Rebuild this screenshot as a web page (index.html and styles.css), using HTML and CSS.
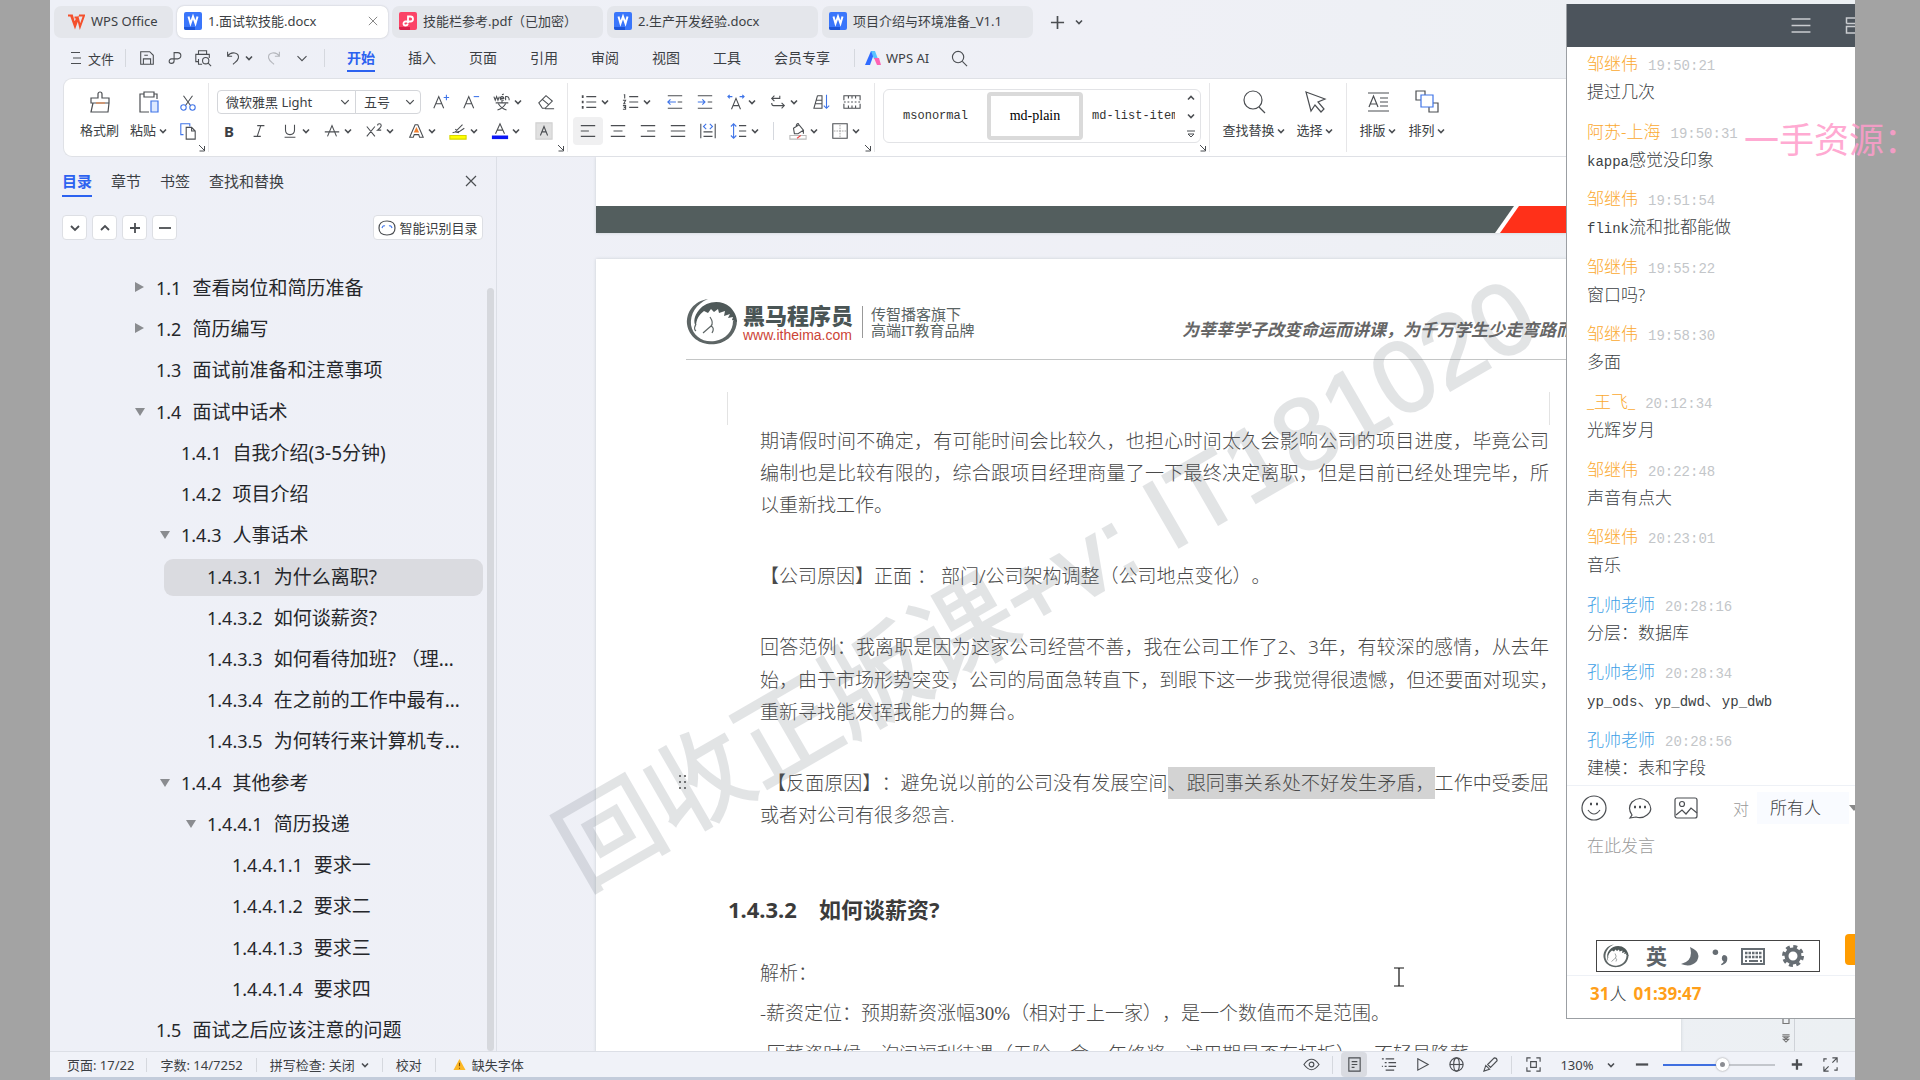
FILE: index.html
```html
<!DOCTYPE html>
<html lang="zh-CN">
<head>
    <meta charset="utf-8">
    <title>1.面试软技能.docx - WPS Office</title>
    <link rel="stylesheet" href="styles.css">
</head>

<body>

    <!-- SHARED ICONS -->
    <svg class="defs">
        <symbol id="chev" viewBox="0 0 8 8"><path d="M1 2.5l3 3 3-3" /></symbol>
        <symbol id="corner" viewBox="0 0 8 8"><path d="M1 1l5 5M6.500 2v5h-5" /></symbol>
        <symbol id="word" viewBox="0 0 18 18"><rect width="18" height="18" rx="2" fill="#3a76fb" stroke="none" /><path d="M0 15h11v3H2q-2 0-2-2z" fill="#1d55d8" stroke="none" /><path d="M4.500 4.500l2 7 2.500-7 2.500 7 2-7" stroke="#fff" stroke-width="2" /></symbol>
        <symbol id="horse" viewBox="0 0 52 48">
            <path d="M22 1C8 3 0 14 1 26c2 15 16 22 29 20 13-2 21-12 21-24l-4 1c0 10-7 18-18 20C17 45 7 38 5 27 4 16 10 6 22 1z" fill="#5d6565" stroke="none" />
            <path d="M13 12C20 3 35 1 44 9c4 4 7 9 7 15l-5-2 1-3-5 1 2-4-6 2 1-5-6 2-1-4-4 3-3-3-3 4-4-2c-5 4-8 8-8 16-3-5-2-11 3-17z" fill="#4f5959" stroke="none" />
            <path d="M10 26q-3 5 0 7M24 19q4 6 1 9l-8 7M25 28q4 2 1 7" stroke="#5d6565" stroke-width="1.200" />
        </symbol>
    </svg>

    <div class="window">

        <!-- TABS -->
        <div class="tabs">
            <button class="tab home"><svg class="i18" viewBox="0 0 18 18"><path d="M1 3.500h4l2.500 9 3-7h-3M4 3.500l4 11 3-8 2 8 4-11h-5" stroke="#f4502c" stroke-width="2" /></svg>WPS Office</button>
            <button class="tab current"><svg class="i18"><use href="#word" /></svg>1.面试软技能.docx<svg class="close" viewBox="0 0 12 12"><path d="M1 1l10 10M11 1L1 11" /></svg></button>
            <button class="tab"><svg class="i18" viewBox="0 0 18 18"><rect width="18" height="18" rx="2" fill="#fb4467" stroke="none" /><path d="M0 15h11v3H2q-2 0-2-2z" fill="#d9204a" stroke="none" /><path d="M9 11V4.500h2.500a2.500 2.500 0 010 5H6.500a2 2 0 100 4q2 0 2.500-2" stroke="#fff" stroke-width="1.800" /></svg>技能栏参考.pdf（已加密）</button>
            <button class="tab"><svg class="i18"><use href="#word" /></svg>2.生产开发经验.docx</button>
            <button class="tab"><svg class="i18"><use href="#word" /></svg>项目介绍与环境准备_V1.1</button>
            <button class="new"><svg viewBox="0 0 16 16"><path d="M8 1v14M1 8h14" stroke-width="1.800" /></svg><svg class="chev"><use href="#chev" /></svg></button>
        </div>

        <!-- MENU -->
        <div class="menubar">
            <button class="file"><svg viewBox="0 0 12 14"><path d="M1 1.500h9M3 7h8M1 12.500h10" /></svg>文件</button>
            <span class="sep"></span>
            <div class="quick">
                <button><svg viewBox="0 0 20 20"><path d="M3 3h10l4 4v10H3zM6 17v-6h8v6M7 7h4" /></svg></button>
                <button><svg viewBox="0 0 20 20"><path d="M9 13V4h4a3 3 0 010 7H6a2.500 2.500 0 100 5q3 0 3-3" /></svg></button>
                <button><svg viewBox="0 0 20 20"><path d="M5 6V2h9v4M5 14H2V6h15v4M5 11v6h4" /><circle cx="13" cy="13" r="3.500" /><path d="M15.500 15.500L19 19" /></svg></button>
                <button class="drop"><svg viewBox="0 0 20 20"><path d="M4 3v5h5M4 8c4-6 13-4 12 2-1 4-4 5-6 7" /></svg><svg class="chev"><use href="#chev" /></svg></button>
                <button class="off"><svg viewBox="0 0 20 20"><path d="M16 3v5h-5M16 8C12 2 3 4 4 10c1 4 4 5 6 7" /></svg></button>
                <button><svg viewBox="0 0 20 20"><path d="M5 8l5 5 5-5" /></svg></button>
            </div>
            <span class="sep"></span>
            <nav>
                <a href="#" class="on">开始</a>
                <a href="#">插入</a>
                <a href="#">页面</a>
                <a href="#">引用</a>
                <a href="#">审阅</a>
                <a href="#">视图</a>
                <a href="#">工具</a>
                <a href="#">会员专享</a>
            </nav>
            <span class="sep"></span>
            <button class="ai"><svg viewBox="0 0 16 14"><path d="M6 0h4L5 14H0z" fill="#2f6bff" stroke="none" /><path d="M6 0h4l3 8H9z" fill="#58c3ff" stroke="none" /><path d="M9 7h5l2 7h-4z" fill="#ff62b4" stroke="none" /></svg>WPS AI</button>
            <button class="search"><svg viewBox="0 0 18 18"><circle cx="7.500" cy="7.500" r="6" /><path d="M12 12l5 5" /></svg></button>
        </div>

        <!-- RIBBON -->
        <div class="ribbon">
            <div class="group clip">
                <button class="big"><svg viewBox="0 0 24 24"><path d="M10 8V4a2 2 0 014 0v4h7v5H3V8zM5 13L3 22h17l1-9" /><path d="M8 13h9" stroke="#e98d52" /></svg>格式刷</button>
                <button class="big"><svg viewBox="0 0 24 24"><path d="M7 4H3v18h9M17 4h3v5M7 2h10v5H7z" /><path d="M14 11h7v11h-7z" stroke="#3f74e8" fill="#dce8ff" /></svg><span>粘贴<svg class="chev"><use href="#chev" /></svg></span></button>
                <div class="stack">
                    <button><svg viewBox="0 0 20 20"><path d="M5 2l8 11M15 2L7 13" /><circle cx="5" cy="15" r="3" stroke="#3f74e8" /><circle cx="15" cy="15" r="3" stroke="#3f74e8" /></svg></button>
                    <button><svg viewBox="0 0 20 20"><path d="M5 14H2V2h10v3" stroke="#3f74e8" /><path d="M8 6h6l4 4v9H8zM14 6v4h4" /></svg></button>
                </div>
                <svg class="corner"><use href="#corner" /></svg>
            </div>

            <div class="group font">
                <div class="row">
                    <label class="combo wide"><select aria-label="字体"><option>微软雅黑 Light</option></select><svg class="chev"><use href="#chev" /></svg></label>
                    <label class="combo"><select aria-label="字号"><option>五号</option></select><svg class="chev"><use href="#chev" /></svg></label>
                    <button class="first"><svg viewBox="0 0 20 20"><path d="M2 17L7.500 4 13 17M4 12h7" /><path d="M16 2v6M13 5h6" stroke="#3f74e8" /></svg></button>
                    <button><svg viewBox="0 0 20 20"><path d="M2 17L7.500 4 13 17M4 12h7" /><path d="M13 4h6" stroke="#3f74e8" /></svg></button>
                    <button class="drop"><svg viewBox="0 0 20 20"><path d="M1 4l1.500 4L4 4l1.500 4L7 4M8 6h4q0-2-2-2t-2 2 4 2M14 8V4q4-1 4 4M10 2l2-1M3 11h14M10 9v2M6 12q3 5 9 7M14 12q-3 5-9 7" /></svg><svg class="chev"><use href="#chev" /></svg></button>
                    <button class="gap"><svg viewBox="0 0 20 20"><path d="M2 11l8-8 7 6-8 8H6zM6 7l7 6M9 17.500h10" /></svg></button>
                </div>
                <div class="row">
                    <button class="letter"><b>B</b></button>
                    <button><svg viewBox="0 0 20 20"><path d="M8 4h8M4 16h8M12 4L8 16" /></svg></button>
                    <button class="drop"><svg viewBox="0 0 20 20"><path d="M5 3v6q0 5 5 5t5-5V3M4 17h12" /></svg><svg class="chev"><use href="#chev" /></svg></button>
                    <button class="drop"><svg viewBox="0 0 20 20"><path d="M5 16l5-12 5 12M2 11h16" /></svg><svg class="chev"><use href="#chev" /></svg></button>
                    <button class="drop"><svg viewBox="0 0 20 20"><path d="M2 5l9 11M11 5L2 16M14 4q0-2 2-2t2 2-4 5h4" /></svg><svg class="chev"><use href="#chev" /></svg></button>
                    <button class="drop"><svg viewBox="0 0 20 20"><path d="M3 17L9 3h3l6 14h-4l-1-3H8l-1 3z" /><path d="M10.500 7l2 4h-4z" stroke="#f08030" fill="#f08030" /></svg><svg class="chev"><use href="#chev" /></svg></button>
                    <button class="drop"><svg viewBox="0 0 20 20"><path d="M4 12l3-1 8-8M7 8l4 3 6-4M7 11l4 1" /><path d="M1 15h18v4H1z" fill="#ff0" stroke="#d6d600" /></svg><svg class="chev"><use href="#chev" /></svg></button>
                    <button class="drop"><svg viewBox="0 0 20 20"><path d="M5 13l5-11 5 11M7 9h6" /><path d="M1 15h18v4H1z" fill="#0b16f5" stroke="none" /></svg><svg class="chev"><use href="#chev" /></svg></button>
                    <button class="gap"><svg viewBox="0 0 20 20"><path d="M1 1h18v18H1z" fill="#e0e0e0" stroke="#d0d0d0" /><path d="M6 15l4-10 4 10M7 11h6" /></svg></button>
                </div>
                <svg class="corner"><use href="#corner" /></svg>
            </div>

            <div class="group para">
                <div class="row">
                    <button class="drop"><svg viewBox="0 0 20 20"><path d="M7 4h11M7 10h11M7 16h11" /><path d="M2 4h2M2 10h2M2 16h2" stroke-width="3" /></svg><svg class="chev"><use href="#chev" /></svg></button>
                    <button class="drop"><svg viewBox="0 0 20 20"><path d="M8 4h10M8 10h10M8 16h10" /><path d="M2 2h1v4M1 8h3l-2 4h2M1 14h3v4H1M2 16h2" /></svg><svg class="chev"><use href="#chev" /></svg></button>
                    <button class="gap"><svg viewBox="0 0 20 20"><path d="M2 3h16M13 10h5M2 17h16" /><path d="M11 10H2M5 7l-3 3 3 3" stroke="#3f74e8" /></svg></button>
                    <button><svg viewBox="0 0 20 20"><path d="M2 3h16M13 10h5M2 17h16" /><path d="M2 10h8M7 7l3 3-3 3" stroke="#3f74e8" /></svg></button>
                    <button class="drop"><svg viewBox="0 0 20 20"><path d="M5 18l5-12 5 12M7 14h6" /><path d="M1 4h5M14 4h5M3 2L1 4l2 2M17 2l2 2-2 2" stroke="#3f74e8" /></svg><svg class="chev"><use href="#chev" /></svg></button>
                    <button class="drop"><svg viewBox="0 0 20 20"><path d="M6 3L3 6l3 3M3 6h9V3M14 11l3 3-3 3M17 14H5q-2 0-2-3" /></svg><svg class="chev"><use href="#chev" /></svg></button>
                    <button class="gap"><svg viewBox="0 0 20 20"><path d="M5 3h5v14H1L5 3M4 8h6M3 12h7" /><path d="M15 2v15M12 14l3 3 3-3" stroke="#3f74e8" /></svg></button>
                    <button><svg viewBox="0 0 20 20"><path d="M1 8V3h18v5M1 12v5h18v-5M6 3v3M10 3v3M14 3v3M6 17v-3M10 17v-3M14 17v-3M1 10h2M5 10h2M9 10h2M13 10h2M17 10h2" /></svg></button>
                </div>
                <div class="row">
                    <button class="picked"><svg viewBox="0 0 20 20"><path d="M2 4h16M2 10h9M2 16h16" /></svg></button>
                    <button><svg viewBox="0 0 20 20"><path d="M2 4h16M5 10h10M2 16h16" /></svg></button>
                    <button><svg viewBox="0 0 20 20"><path d="M2 4h16M9 10h9M2 16h16" /></svg></button>
                    <button><svg viewBox="0 0 20 20"><path d="M2 4h16M2 10h16M2 16h16" /></svg></button>
                    <button><svg viewBox="0 0 20 20"><path d="M2 2v16M18 2v16M5 11h10M5 16h10" /><path d="M8 2L5 5l3 3M12 2l3 3-3 3" stroke="#3f74e8" /></svg></button>
                    <button class="drop"><svg viewBox="0 0 20 20"><path d="M10 4h8M10 10h8M10 16h8" /><path d="M4 2v16M1 5l3-3 3 3M1 15l3 3 3-3" stroke="#3f74e8" /></svg><svg class="chev"><use href="#chev" /></svg></button>
                    <span class="sep"></span>
                    <button class="drop"><svg viewBox="0 0 20 20"><path d="M5 7l6-4 5 6-6 4H6zM8 5q0-4 3-3M16 9v4" /><path d="M1 15h18v4H1z" stroke="#bbb" /><path d="M9 18l4-3" stroke="#e44" /></svg><svg class="chev"><use href="#chev" /></svg></button>
                    <button class="drop"><svg viewBox="0 0 20 20"><path d="M2 2h16v16H2z" /><path d="M10 3v14M3 10h14" stroke="#aaa" stroke-dasharray="2 1" /></svg><svg class="chev"><use href="#chev" /></svg></button>
                </div>
                <svg class="corner"><use href="#corner" /></svg>
            </div>

            <div class="group styles">
                <div class="gallery">
                    <button class="mono">msonormal</button>
                    <button class="chosen">md-plain</button>
                    <button class="mono cut">md-list-item</button>
                    <div class="arrows">
                        <svg class="chev up"><use href="#chev" /></svg>
                        <svg class="chev"><use href="#chev" /></svg>
                        <svg class="chev thin" viewBox="0 0 8 8"><path d="M0 1h8M1 4l3 3 3-3z" /></svg>
                    </div>
                </div>
                <svg class="corner"><use href="#corner" /></svg>
            </div>

            <div class="group edit">
                <button class="big"><svg viewBox="0 0 24 24"><circle cx="11" cy="10" r="9" /><path d="M17 17l6 6" /></svg><span>查找替换<svg class="chev"><use href="#chev" /></svg></span></button>
                <button class="big"><svg viewBox="0 0 24 24"><path d="M3 2l19 7-7 3 6 7-3 3-6-7-4 6z" /></svg><span>选择<svg class="chev"><use href="#chev" /></svg></span></button>
            </div>

            <div class="group arrange">
                <button class="big"><svg viewBox="0 0 24 24"><path d="M2 3h21M2 21h21M14 8h8M14 12h8M14 16h8M3 17L7.500 6 12 17M4 14h7" /></svg><span>排版<svg class="chev"><use href="#chev" /></svg></span></button>
                <button class="big"><svg viewBox="0 0 24 24"><path d="M6 10H1V1h9v4M18 13h5v9h-9v-5" /><path d="M6 5h12v12H6z" stroke="#3f74e8" /></svg><span>排列<svg class="chev"><use href="#chev" /></svg></span></button>
            </div>
        </div>

        <div class="main">

            <!-- OUTLINE -->
            <aside class="outline">
                <div class="outline-tabs">
                    <a href="#" class="on">目录</a>
                    <a href="#">章节</a>
                    <a href="#">书签</a>
                    <a href="#">查找和替换</a>
                    <button><svg viewBox="0 0 12 12"><path d="M1 1l10 10M11 1L1 11" /></svg></button>
                </div>
                <div class="outline-tools">
                    <button><svg viewBox="0 0 12 12"><path d="M2 4l4 4 4-4" /></svg></button>
                    <button><svg viewBox="0 0 12 12"><path d="M2 8l4-4 4 4" /></svg></button>
                    <button><svg viewBox="0 0 12 12"><path d="M6 1v10M1 6h10" /></svg></button>
                    <button><svg viewBox="0 0 12 12"><path d="M0 6h12" /></svg></button>
                    <button class="smart"><svg viewBox="0 0 18 16"><path d="M9 1c5 0 8 2 8 7s-3 7-8 7-8-2-8-7 3-7 8-7z" /><path d="M4 8q1-3 3-2M11 6q2-1 3 2" stroke="#3f74e8" /></svg>智能识别目录</button>
                </div>
                <div class="tree-wrap">
                    <div class="tree">
                        <a href="#" class="l1 shut"><i>1.1</i>查看岗位和简历准备</a>
                        <a href="#" class="l1 shut"><i>1.2</i>简历编写</a>
                        <a href="#" class="l1"><i>1.3</i>面试前准备和注意事项</a>
                        <a href="#" class="l1 open"><i>1.4</i>面试中话术</a>
                        <a href="#" class="l2"><i>1.4.1</i>自我介绍(3-5分钟)</a>
                        <a href="#" class="l2"><i>1.4.2</i>项目介绍</a>
                        <a href="#" class="l2 open"><i>1.4.3</i>人事话术</a>
                        <a href="#" class="l3 on"><i>1.4.3.1</i>为什么离职?</a>
                        <a href="#" class="l3"><i>1.4.3.2</i>如何谈薪资?</a>
                        <a href="#" class="l3"><i>1.4.3.3</i>如何看待加班? （理…</a>
                        <a href="#" class="l3"><i>1.4.3.4</i>在之前的工作中最有…</a>
                        <a href="#" class="l3"><i>1.4.3.5</i>为何转行来计算机专…</a>
                        <a href="#" class="l2 open"><i>1.4.4</i>其他参考</a>
                        <a href="#" class="l3 open"><i>1.4.4.1</i>简历投递</a>
                        <a href="#" class="l4"><i>1.4.4.1.1</i>要求一</a>
                        <a href="#" class="l4"><i>1.4.4.1.2</i>要求二</a>
                        <a href="#" class="l4"><i>1.4.4.1.3</i>要求三</a>
                        <a href="#" class="l4"><i>1.4.4.1.4</i>要求四</a>
                        <a href="#" class="l1"><i>1.5</i>面试之后应该注意的问题</a>
                    </div>
                    <div class="thumb"></div>
                </div>
            </aside>

            <!-- DOCUMENT -->
            <div class="doc">
                <div class="pages">
                    <div class="page prev">
                        <div class="band"><span class="dark"></span><span class="red"></span></div>
                    </div>
                    <div class="page">
                        <header>
                            <svg class="horse"><use href="#horse" /></svg>
                            <div class="brand"><strong>黑马程序员</strong><span>www.itheima.com</span></div>
                            <div class="tagline">传智播客旗下<br>高端IT教育品牌</div>
                            <div class="slogan">为莘莘学子改变命运而讲课，为千万学生少走弯路而</div>
                        </header>
                        <div class="marks"></div>
                        <article>
                            <p>期请假时间不确定，有可能时间会比较久，也担心时间太久会影响公司的项目进度，毕竟公司编制也是比较有限的，综合跟项目经理商量了一下最终决定离职，但是目前已经处理完毕，所以重新找工作。</p>
                            <p>【公司原因】正面 ： 部门/公司架构调整（公司地点变化）。</p>
                            <p>回答范例：我离职是因为这家公司经营不善，我在公司工作了2、3年，有较深的感情，从去年始，由于市场形势突变，公司的局面急转直下，到眼下这一步我觉得很遗憾，但还要面对现实<span class="half">，</span>重新寻找能发挥我能力的舞台。</p>
                            <p class="here"><svg class="grip" viewBox="0 0 9 16"><path d="M1 1h2M6 1h2M1 7h2M6 7h2M1 13h2M6 13h2" /></svg>【反面原因】：避免说以前的公司没有发展空间<mark>、跟同事关系处不好发生矛盾，</mark>工作中受委屈或者对公司有很多怨言.</p>
                            <h2><span>1.4.3.2</span>如何谈薪资?</h2>
                            <p class="tight">解析：</p>
                            <p class="tight">-薪资定位：预期薪资涨幅<span class="serif">30%</span>（相对于上一家），是一个数值而不是范围。</p>
                            <p class="tight">-压薪资时候，询问福利待遇（五险一金，年终奖，试用期是否有打折），不轻易降薪</p>
                        </article>
                    </div>
                </div>
                <div class="watermark">回收正版课+v: IT181020</div>
                <div class="vscroll">
                    <svg viewBox="0 0 8 8"><path d="M1 1h6v6H1z" /></svg>
                    <svg viewBox="0 0 8 10"><path d="M0 1h8M1 3h6L4 5zM1 6h6L4 9z" /></svg>
                </div>
                <svg class="ibeam" viewBox="0 0 12 20"><path d="M1 1h10M6 1v18M1 19h10" /></svg>
            </div>
        </div>

        <!-- STATUS BAR -->
        <div class="status">
            <span>页面: 17/22</span>
            <span>字数: 14/7252</span>
            <button>拼写检查: 关闭 <svg class="chev"><use href="#chev" /></svg></button>
            <button>校对</button>
            <button><svg class="warn" viewBox="0 0 14 14"><path d="M7 1l6.500 12H.5z" fill="#fcb827" stroke="none" /><path d="M7 5v4M7 10.500v1" stroke="#7a4a00" /></svg>缺失字体</button>
            <div class="views">
                <button><svg viewBox="0 0 18 18"><path d="M1 9q8-11 16 0-8 11-16 0z" /><circle cx="9" cy="9" r="2.500" /></svg></button>
                <span class="sep"></span>
                <button class="picked"><svg viewBox="0 0 18 18"><path d="M3 2h12v14H3zM6 6h6M6 9h6M6 12h3" /></svg></button>
                <button><svg viewBox="0 0 18 18"><path d="M2 3h2M6 3h9M5 7h2M9 7h8M5 11h2M9 11h8M6 15h9M2 11h1" /></svg></button>
                <button><svg viewBox="0 0 18 18"><path d="M4 3l11 6-11 6z" /></svg></button>
                <button><svg viewBox="0 0 18 18"><circle cx="9" cy="9" r="7" /><ellipse cx="9" cy="9" rx="3" ry="7" /><path d="M2 9h14" /></svg></button>
                <button><svg viewBox="0 0 18 18"><path d="M2 16l2-6 4 4zM6 9l7-7q3 0 3 3l-7 7z" /></svg></button>
                <span class="sep"></span>
                <button><svg viewBox="0 0 18 18"><path d="M2 6V2h4M12 2h4v4M16 12v4h-4M6 16H2v-4M6 6h6v6H6z" /></svg></button>
                <button class="zoom">130%<svg class="chev"><use href="#chev" /></svg></button>
                <button class="bold"><svg viewBox="0 0 18 18"><path d="M2 9h13" /></svg></button>
                <input type="range" min="0" max="100" value="54" aria-label="缩放">
                <button class="bold"><svg viewBox="0 0 18 18"><path d="M4 9h11M9.500 3.500v11" /></svg></button>
                <button class="full"><svg viewBox="0 0 18 18"><path d="M2 6V3h3M11 2h5v5M16 2l-5 5M16 12v3h-3M7 16H2v-5M2 16l5-5" /></svg></button>
            </div>
        </div>

        <!-- CHAT -->
        <section class="chat">
            <div class="chat-head">
                <svg viewBox="0 0 20 18"><path d="M0 2h20M0 9h20M0 16h20" /></svg>
                <svg viewBox="0 0 20 18"><path d="M1 7V1h18v6M1 10h18v7H1zM1 7h18" /></svg>
            </div>
            <ul>
                <li><b>邹继伟</b><time>19:50:21</time><p>提过几次</p></li>
                <li><b>阿苏-上海</b><time>19:50:31</time><p><span>kappa</span>感觉没印象</p></li>
                <li><b>邹继伟</b><time>19:51:54</time><p><span>flink</span>流和批都能做</p></li>
                <li><b>邹继伟</b><time>19:55:22</time><p>窗口吗?</p></li>
                <li><b>邹继伟</b><time>19:58:30</time><p>多面</p></li>
                <li><b>_王飞_</b><time>20:12:34</time><p>光辉岁月</p></li>
                <li><b>邹继伟</b><time>20:22:48</time><p>声音有点大</p></li>
                <li><b>邹继伟</b><time>20:23:01</time><p>音乐</p></li>
                <li class="teacher"><b>孔帅老师</b><time>20:28:16</time><p>分层：数据库</p></li>
                <li class="teacher"><b>孔帅老师</b><time>20:28:34</time><p><span>yp_ods</span>、<span>yp_dwd</span>、<span>yp_dwb</span></p></li>
                <li class="teacher"><b>孔帅老师</b><time>20:28:56</time><p>建模：表和字段</p></li>
            </ul>
            <div class="chat-tools">
                <button><svg viewBox="0 0 26 26"><circle cx="13" cy="13" r="12" /><path d="M7 15q6 8 12 0" /><path d="M9 9h2M15 9h2" stroke-width="2.500" /></svg></button>
                <button><svg viewBox="0 0 26 26"><path d="M5 20q-5-7 0-13 8-7 16 0 6 8-1 13-5 4-11 2l-6 1z" /><path d="M7 12h2M12 12h2M17 12h2" stroke-width="2.500" /></svg></button>
                <button><svg viewBox="0 0 26 26"><rect x="2" y="3" width="22" height="20" rx="2" /><circle cx="9" cy="9" r="2.500" /><path d="M3 20l6-5 4 4 5-6 6 5" /></svg></button>
                <label for="to">对</label>
                <select id="to"><option>所有人</option></select>
                <span class="to-arrow"></span>
            </div>
            <textarea placeholder="在此发言" aria-label="在此发言"></textarea>
            <div class="send-row">
                <div class="ime">
                    <svg class="ime-logo" viewBox="0 0 52 48"><use href="#horse" /></svg>
                    <b>英</b>
                    <svg viewBox="0 0 24 24"><path d="M13 3q12 5 7 14-6 7-16 3 13-3 9-17z" fill="#666d73" stroke="none" /></svg>
                    <svg viewBox="0 0 24 24"><circle cx="7" cy="8" r="3" fill="#666d73" stroke="none" /><path d="M16 11a4 4 0 014 4q0 5-6 7l-1-1q3-2 3-3a4 4 0 010-7z" fill="#666d73" stroke="none" /></svg>
                    <svg viewBox="0 0 24 24"><path d="M1 5h22v15H1z" stroke="#666d73" stroke-width="2" /><path d="M4 9h17M4 13h17" stroke="#666d73" stroke-width="2.500" stroke-dasharray="2.500 1" /><path d="M4 17h2M8 17h9M19 17h2" stroke="#666d73" stroke-width="2" /></svg>
                    <svg viewBox="0 0 24 24"><circle cx="12" cy="12" r="6.500" stroke="#666d73" stroke-width="4" /><circle cx="12" cy="12" r="9.500" stroke="#666d73" stroke-width="3" stroke-dasharray="4 3.460" /></svg>
                </div>
                <button class="send" aria-label="发送"></button>
            </div>
            <div class="chat-foot"><b>31</b>人<b class="clock">01:39:47</b></div>
        </section>
    </div>

    <div class="banner">一手资源：</div>

</body>

</html>
```
FILE: styles.css
```css
* {
    box-sizing: border-box;
}

body {
    margin: 0;
    height: 100vh;
    padding: 0 65px 0 50px;
    background: #a3a3a3;
    font-family: "Noto Sans", "Noto Sans CJK SC", sans-serif;
    font-size: 13px;
    color: #3c3f44;
    position: relative;
    overflow: hidden;
    text-spacing-trim: space-all;
}

button,
select,
input,
textarea {
    font: inherit;
    color: inherit;
    border: none;
    background: none;
    padding: 0;
    margin: 0;
    outline: none;
}

button {
    display: flex;
    align-items: center;
    justify-content: center;
    white-space: nowrap;
    flex: none;
}

a {
    color: inherit;
    text-decoration: none;
}

svg {
    fill: none;
    stroke: #4b4e52;
    stroke-width: 1.2;
    flex: none;
}

.defs {
    position: absolute;
    width: 0;
    height: 0;
}

.chev {
    width: 8px;
    height: 8px;
    stroke-width: 1.6;
}

.up {
    transform: rotate(180deg);
}

.sep {
    width: 1px;
    height: 18px;
    background: #d5d8de;
    flex: none;
}

.window {
    position: relative;
    height: 100%;
    display: flex;
    flex-direction: column;
    overflow: hidden;
    background: linear-gradient(90deg, #eef0f7, #eff0f6 60%, #ecf0f3);
    border-bottom: 3px solid #c3ccdb;
}

/* tabs */
.tabs {
    display: flex;
    gap: 4px;
    padding: 6px 0 0 4px;
    line-height: 16px;
}

.tab {
    width: 211px;
    height: 32px;
    padding: 0 10px 2px 7px;
    justify-content: flex-start;
    gap: 6px;
    border-radius: 7px;
    background: #e4e6eb;
}

.tab.home {
    width: 119px;
    padding-left: 13px;
}

.tab.current {
    background: #fff;
    box-shadow: 0 0 2px #b9bcc2;
}

.i18 {
    width: 18px;
    height: 18px;
}

.close {
    width: 10px;
    height: 10px;
    margin-left: auto;
    stroke: #888;
}

.new {
    gap: 10px;
    padding-left: 13px;
}

.new svg:first-child {
    width: 15px;
    height: 15px;
}

/* menu */
.menubar {
    display: flex;
    align-items: center;
    height: 40px;
    padding-left: 20px;
}

.file {
    gap: 6px;
    margin-right: 11px;
}

.file svg {
    width: 12px;
    height: 14px;
}

.quick {
    display: flex;
    padding: 0 8px 0 7px;
}

.quick button {
    width: 28px;
    height: 24px;
}

.quick .drop {
    width: 43px;
    gap: 3px;
}

.quick svg:first-child {
    width: 18px;
    height: 18px;
}

.off {
    opacity: .35;
}

nav {
    display: flex;
    gap: 33px;
    padding: 0 24px 0 22px;
    font-size: 14px;
    line-height: 24px;
}

.on {
    font-weight: bold;
    color: #2c62f0;
    box-shadow: 0 2px #2c62f0;
}

.ai {
    gap: 5px;
    margin: 0 22px 0 10px;
}

.ai svg {
    width: 16px;
    height: 14px;
}

.search svg {
    width: 17px;
    height: 17px;
}

/* ribbon */
.ribbon {
    display: flex;
    height: 79px;
    margin-left: 13px;
    background: #fff;
    border: 1px solid #dfe1e6;
    border-right: none;
    border-radius: 9px 0 0 9px;
    flex: none;
}

.group {
    position: relative;
    margin: 4px 0;
    border-right: 1px solid #e6e6e8;
    flex: none;
}

.corner {
    position: absolute;
    right: 2px;
    bottom: 0;
    width: 8px;
    height: 8px;
    stroke-width: 1;
}

.clip,
.edit,
.arrange {
    display: flex;
}

.clip {
    width: 145px;
    padding-left: 11px;
}

.big {
    flex-direction: column;
    justify-content: flex-start;
    width: 49px;
    padding-top: 7px;
    gap: 6px;
    line-height: 20px;
}

.big > svg {
    width: 24px;
    height: 24px;
}

.big .chev {
    margin-left: 3px;
}

.stack {
    padding-top: 6px;
}

.stack button,
.row button {
    width: 30px;
    height: 28px;
}

.stack svg,
.row button svg:first-child {
    width: 18px;
    height: 18px;
}

.row {
    display: flex;
    align-items: center;
    height: 29px;
}

.row .drop {
    width: 42px;
    gap: 3px;
}

.row .gap {
    margin-left: 3px;
}

.font {
    width: 359px;
    padding: 4px 0 0 5px;
}

.combo {
    position: relative;
    width: 66px;
    height: 24px;
    border: 1px solid #d4d6da;
    border-radius: 0 4px 4px 0;
}

.combo.wide {
    width: 139px;
    margin: 0 -1px 0 3px;
    border-radius: 4px 0 0 4px;
}

.combo select {
    appearance: none;
    width: 100%;
    height: 22px;
    padding-left: 8px;
}

.combo .chev {
    position: absolute;
    right: 5px;
    top: 6px;
    width: 10px;
    height: 10px;
    stroke-width: 1;
}

.row .first {
    margin-left: 5px;
}

.letter {
    font-size: 15px;
}

.para {
    width: 307px;
    padding: 4px 0 0 5px;
}

.para .sep {
    margin: 0 8px;
}

.row .picked {
    background: #f0f0f1;
    border-radius: 4px;
}

.styles {
    width: 335px;
    padding: 6px 8px;
}

.gallery {
    display: flex;
    align-items: center;
    height: 54px;
    padding: 3px 0;
    border: 1px solid #e2e3e6;
    border-radius: 6px;
    color: #333;
}

.gallery button {
    width: 97px;
    height: 48px;
    margin-left: 3px;
}

.mono {
    font: 12px/16px "Liberation Mono", monospace;
}

.gallery .chosen {
    width: 96px;
    border: 4px solid #dadada;
    border-radius: 4px;
    font: 14px/16px "Liberation Serif", serif;
    color: #000;
}

.gallery .cut {
    width: 83px;
    margin-left: 9px;
    overflow: hidden;
    justify-content: flex-start;
}

.arrows {
    display: flex;
    flex-direction: column;
    gap: 10px;
    margin-left: 12px;
}

.thin {
    stroke-width: 1;
}

.edit {
    width: 137px;
    padding-left: 7px;
}

.edit .big:first-child {
    width: 73px;
}

.arrange {
    padding-left: 6px;
    border: none;
}

.edit .chev,
.arrange .chev {
    margin-left: 2px;
}

/* outline */
.main {
    flex: 1;
    display: flex;
    min-height: 0;
}

.outline {
    width: 447px;
    display: flex;
    flex-direction: column;
    border-right: 1px solid #dcdfe6;
    flex: none;
}

.outline-tabs {
    display: flex;
    align-items: center;
    gap: 19px;
    padding: 10px 19px 0 12px;
    font-size: 15px;
    line-height: 28px;
}

.outline-tabs button {
    margin-left: auto;
}

.outline-tabs svg {
    width: 12px;
    height: 12px;
}

.outline-tools {
    display: flex;
    gap: 5px;
    padding: 20px 13px 0 12px;
}

.outline-tools button {
    width: 25px;
    height: 25px;
    background: #fff;
    border: 1px solid #dddfe4;
    border-radius: 4px;
}

.outline-tools svg {
    width: 12px;
    height: 12px;
    stroke-width: 1.8;
}

.outline-tools .smart {
    width: 110px;
    margin-left: auto;
    gap: 3px;
}

.outline-tools .smart svg {
    width: 18px;
    height: 16px;
    stroke-width: 1.2;
}

.tree-wrap {
    flex: 1;
    display: flex;
    min-height: 0;
    padding-top: 30px;
}

.tree {
    flex: 1;
    display: flex;
    flex-direction: column;
    justify-content: space-between;
    padding: 0 4px 2px 0;
    font-size: 19px;
    line-height: 37px;
    color: #25272b;
}

.tree a {
    position: relative;
    padding-left: 43px;
    height: 37px;
    white-space: nowrap;
}

.tree i {
    font-style: normal;
    font-size: 18px;
    margin-right: 11px;
}

.l1 {
    margin-left: 63px;
}

.l2 {
    margin-left: 88px;
}

.l3 {
    margin-left: 114px;
}

.l4 {
    margin-left: 139px;
}

.shut::before,
.open::before {
    content: "";
    position: absolute;
    left: 22px;
    top: 12px;
    border: 5px solid transparent;
    border-left: 9px solid #8a8c90;
    border-right: none;
}

.open::before {
    border: 5px solid transparent;
    border-top: 8px solid #8a8c90;
    border-bottom: none;
    top: 14px;
}

.tree .on {
    font-weight: normal;
    color: #25272b;
    background: #dadbe0;
    border-radius: 9px;
    box-shadow: none;
}

.thumb {
    width: 7px;
    margin: 18px 2px 0 0;
    border-radius: 4px;
    background: #d6d8dd;
}

/* document */
.doc {
    position: relative;
    flex: 1;
    display: flex;
    overflow: hidden;
}

.pages {
    width: 1085px;
    margin-left: 99px;
    flex: none;
}

.page {
    background: #fff;
    box-shadow: 0 0 3px #c9ccd3;
}

.prev {
    padding-top: 49px;
    margin-bottom: 26px;
}

.band {
    display: flex;
    height: 27px;
}

.dark {
    flex: 1;
    background: #535e5e;
    clip-path: polygon(0 0, 100% 0, calc(100% - 19px) 100%, 0 100%);
}

.red {
    width: 181px;
    margin-left: -14px;
    background: #ff3019;
    clip-path: polygon(19px 0, 100% 0, 100% 100%, 0 100%);
}

.page header {
    display: flex;
    align-items: center;
    height: 101px;
    margin: 0 90px;
    padding-top: 25px;
    border-bottom: 1px solid #c4c6c6;
}

.horse {
    width: 52px;
    height: 48px;
}

.brand {
    margin-left: 5px;
    padding-top: 4px;
}

.brand strong {
    display: block;
    font-size: 22px;
    font-weight: 900;
    line-height: 22px;
    color: #4a5555;
}

.brand span {
    display: block;
    font: 14px/18px "Liberation Sans", sans-serif;
    color: #cc4436;
}

.tagline {
    margin-left: 9px;
    padding-left: 8px;
    border-left: 1px solid #999;
    font-size: 15px;
    line-height: 16px;
    color: #5a6464;
    white-space: nowrap;
}

.slogan {
    margin: 0 18px 0 auto;
    padding-top: 14px;
    font-size: 17px;
    font-style: italic;
    font-weight: bold;
    white-space: nowrap;
    color: #666;
}

.marks {
    height: 33px;
    margin: 32px 131px 0;
    border: 1px solid #e3e3e3;
    border-width: 0 1px;
}

article {
    padding: 0 132px;
    font-size: 19px;
    font-weight: 300;
    line-height: 32px;
    color: #4a4a4a;
}

article p {
    position: relative;
    margin: 0 0 39px;
    padding-left: 32px;
    text-align: justify;
}

article .here {
    text-indent: 7px;
}

article .tight {
    margin-bottom: 8px;
}

/* half-width comma at the end of a full line */
.half {
    font-family: "Noto Sans CJK SC", sans-serif;
    font-feature-settings: "halt";
}

.grip {
    position: absolute;
    left: -50px;
    top: 8px;
    width: 9px;
    height: 16px;
    stroke: #777;
    stroke-width: 2;
}

mark {
    padding: 3px 0;
    background: #d3d3d3;
    color: inherit;
}

h2 {
    margin: 62px 0 32px;
    font-size: 22px;
    line-height: 32px;
    color: #3b3b3b;
}

h2 span {
    margin-right: 22px;
}

.serif {
    font-family: "Liberation Serif", serif;
}

.watermark {
    position: absolute;
    left: 545px;
    top: 418px;
    transform: translate(-50%, -50%) rotate(-30deg);
    font: 102px "Liberation Sans", "Noto Sans CJK SC", sans-serif;
    white-space: nowrap;
    color: #59636d;
    -webkit-text-stroke: 2px #59636d;
    opacity: .17;
}

.vscroll {
    display: flex;
    flex-direction: column;
    align-items: center;
    justify-content: flex-end;
    gap: 9px;
    width: 18px;
    margin: 0 60px 0 auto;
    padding-bottom: 8px;
    border-right: 1px solid #cfd3d8;
}

.vscroll svg {
    width: 8px;
    height: 9px;
    stroke: #777;
}

.ibeam {
    position: absolute;
    left: 896px;
    top: 810px;
    width: 12px;
    height: 20px;
    stroke: #111;
}

/* status bar */
.status {
    display: flex;
    align-items: center;
    height: 26px;
    padding: 0 8px 0 17px;
    background: #f0f2f8;
    border-top: 1px solid #dcdfe6;
    white-space: nowrap;
    flex: none;
}

.status > span,
.status > button {
    padding-right: 13px;
    margin-right: 13px;
    border-right: 1px solid #d5d8de;
    line-height: 14px;
}

.status > span:first-child {
    padding-right: 12px;
}

.status > button:nth-child(5) {
    border: none;
}

.status > button .chev {
    margin-left: 6px;
}

.warn {
    width: 13px;
    height: 13px;
    margin: 0 6px 0 4px;
}

.views {
    display: flex;
    align-items: center;
    margin-left: auto;
}

.views button {
    width: 34px;
    height: 25px;
}

.views button svg:first-child {
    width: 17px;
    height: 17px;
}

.views .sep {
    margin: 0 4px;
}

.views .picked {
    width: 26px;
    margin: 0 4px;
    background: #d9dbe1;
    border-radius: 4px;
}

.views .zoom {
    width: 75px;
    gap: 13px;
}

.views .zoom .chev {
    width: 8px;
    height: 8px;
}

.bold svg {
    stroke-width: 2.4;
}

.views input {
    appearance: none;
    width: 112px;
    height: 2px;
    margin: 0 4px;
    background: linear-gradient(90deg, #3f6fe0 54%, #c3c6cc 54%);
}

.views input::-webkit-slider-thumb {
    appearance: none;
    width: 13px;
    height: 13px;
    border-radius: 50%;
    border: 4px solid #fff;
    background: #8b8d92;
    box-shadow: 0 0 2px #888;
}

/* chat */
.chat {
    position: absolute;
    top: 4px;
    right: 0;
    bottom: 58px;
    width: 289px;
    display: flex;
    flex-direction: column;
    overflow: hidden;
    background: #fff;
    border: 1px solid #9b9fa3;
    border-width: 0 0 1px 1px;
    font-size: 17px;
    font-weight: 300;
}

.chat-head {
    display: flex;
    align-items: center;
    height: 43px;
    padding-left: 224px;
    gap: 34px;
    background: #4c545c;
    flex: none;
}

.chat-head svg {
    width: 20px;
    height: 17px;
    stroke: #c9ccd0;
    stroke-width: 1.6;
}

.chat ul {
    flex: 1;
    display: flex;
    flex-direction: column;
    justify-content: space-between;
    list-style: none;
    margin: 0;
    padding: 3px 0 3px 20px;
    line-height: 28px;
}

.chat li {
    height: 56px;
}

.chat li b {
    font-weight: 300;
    color: #fba930;
}

.chat .teacher b {
    color: #3f9fe6;
}

.chat p {
    margin: 0;
}

.chat time,
.chat p span {
    font: 14px "Liberation Mono", monospace;
}

.chat time {
    margin-left: 10px;
    color: #c3c6c9;
}

.chat-tools {
    display: flex;
    align-items: center;
    height: 44px;
    padding-left: 14px;
    border-top: 1px solid #eef1f6;
    flex: none;
}

.chat-tools svg {
    width: 26px;
    height: 26px;
    margin-right: 20px;
}

.chat-tools label {
    margin: 0 8px 0 14px;
    font-size: 16px;
    color: #999;
}

.chat-tools select {
    appearance: none;
    width: 92px;
    height: 32px;
    padding-left: 13px;
    background: #f9fbff;
    flex: none;
}

.to-arrow {
    border: 5px solid transparent;
    border-top: 6px solid #888;
    border-bottom: none;
    flex: none;
}

.chat textarea {
    height: 105px;
    padding: 3px 20px;
    resize: none;
    flex: none;
}

.chat textarea::placeholder {
    color: #9b9b9b;
}

.send-row {
    display: flex;
    align-items: flex-start;
    height: 41px;
    padding-left: 29px;
    flex: none;
}

.ime {
    display: flex;
    align-items: center;
    gap: 10px;
    width: 224px;
    height: 32px;
    margin-top: 6px;
    padding: 0 0 0 5px;
    border: 1px solid #444;
    flex: none;
}

.ime svg {
    width: 24px;
    height: 24px;
}

.ime .ime-logo {
    width: 28px;
    margin-right: 6px;
}

.ime b {
    font-size: 21px;
    font-weight: 700;
    line-height: 24px;
    color: #5d6469;
}

.ime svg:nth-child(4) {
    width: 22px;
}

.ime svg:nth-child(5) {
    margin-right: 6px;
}

.ime svg:nth-child(3) {
    margin-right: -2px;
}

.send {
    width: 40px;
    height: 31px;
    margin-left: 25px;
    border-radius: 4px;
    background: #ff9c00;
}

.chat-foot {
    height: 43px;
    padding-left: 23px;
    border-top: 1px solid #eef1f6;
    line-height: 36px;
    flex: none;
}

.chat-foot b {
    font-weight: 700;
    font-size: 17px;
    color: #ff9f1a;
}

.clock {
    margin-left: 7px;
}

.banner {
    position: absolute;
    right: 1px;
    top: 115px;
    font-size: 35px;
    line-height: 50px;
    color: #ff9ccb;
    opacity: .85;
}
```
